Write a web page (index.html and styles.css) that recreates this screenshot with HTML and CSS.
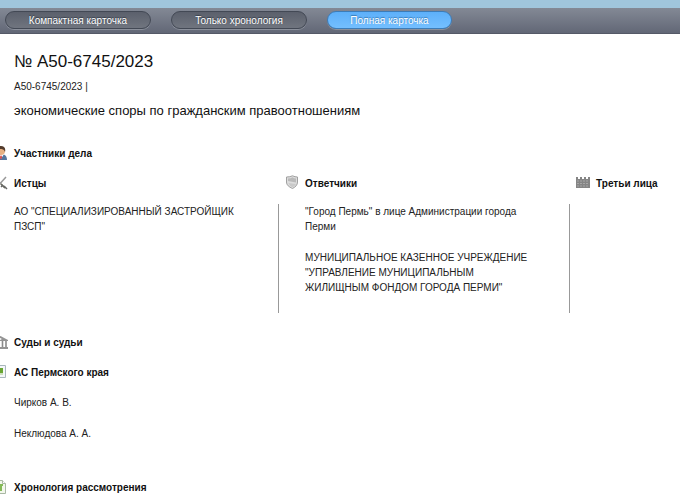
FILE: index.html
```html
<!DOCTYPE html>
<html lang="ru">
<head>
<meta charset="utf-8">
<title>А50-6745/2023</title>
<link rel="stylesheet" href="styles.css">
</head>
<body>
<nav class="bar">
  <button class="tab tab-wide" type="button">Компактная карточка</button>
  <button class="tab tab-mid" type="button">Только хронология</button>
  <button class="tab tab-active" type="button">Полная карточка</button>
</nav>
<main class="card">
  <header class="intro">
    <h1 class="number">№ А50-6745/2023</h1>
    <p class="ref">А50-6745/2023 |</p>
    <p class="subject">экономические споры по гражданским правоотношениям</p>
  </header>

  <section class="parties">
    <h2 class="head">
      <svg class="icon" viewBox="0 0 16 16" aria-hidden="true"><path d="M0 15c0-4 2-6 7-6s7 2 7 6z" fill="#56779f"/><path d="M5 9l3 5 3-5z" fill="#fff"/><path d="M8 10l1 2-1 3-1-3z" fill="#c33"/><circle cx="8" cy="6" r="4" fill="#e7b184"/><path d="M3 6c0-4 2-5 5-5s5 2 4 6c-1-3-3-3-5-3z" fill="#533c2c"/></svg>
      Участники дела
    </h2>
    <div class="columns">
      <section class="column">
        <h3 class="head">
          <svg class="icon" viewBox="0 0 16 16" aria-hidden="true"><path d="M1 2l11 11M13 2L4 12" stroke="#999" stroke-width="1.5"/><path d="M8 9l4 4" stroke="#696b5d" stroke-width="1.4"/><path d="M8 12l2-2M11 11l3 3" stroke="#666" stroke-width="1.5"/></svg>
          Истцы
        </h3>
        <div class="names"><p>АО "СПЕЦИАЛИЗИРОВАННЫЙ ЗАСТРОЙЩИК ПЗСП"</p></div>
      </section>
      <section class="column">
        <h3 class="head">
          <svg class="icon" viewBox="0 0 16 16" aria-hidden="true"><path d="M2.5 2Q6 2 8.500 .8Q11 2 13.500 2v5c0 3-2 5-5 6.500C5 12 2.500 10 2.500 7z" fill="#ddd" stroke="#a0a0a0"/><path d="M4 3.500q3 0 4.500-1.200Q10 3.500 12 3.500v4L4 6z" fill="#b9b9b9"/><path d="M4.500 8l7.500 1q-1 2-3.500 3.200Q5.500 11 4.500 8z" fill="#c9c9c9"/></svg>
          Ответчики
        </h3>
        <div class="names">
          <p>"Город Пермь" в лице Администрации города Перми</p>
          <p>МУНИЦИПАЛЬНОЕ КАЗЕННОЕ УЧРЕЖДЕНИЕ "УПРАВЛЕНИЕ МУНИЦИПАЛЬНЫМ<br>ЖИЛИЩНЫМ ФОНДОМ ГОРОДА ПЕРМИ"</p>
        </div>
      </section>
      <section class="column">
        <h3 class="head">
          <svg class="icon" viewBox="0 0 16 16" aria-hidden="true"><path d="M1 2h2v2h2V2h2v2h2V2h2v2h2V2h2v11H1z" fill="#858585"/><path d="M2 6h12M2 8.500h12M2 11h12" stroke="#b5b5b5" stroke-width=".7" stroke-dasharray="2 1"/></svg>
          Третьи лица
        </h3>
        <div class="names"></div>
      </section>
    </div>
  </section>

  <section class="courts">
    <h2 class="head">
      <svg class="icon" viewBox="0 0 16 16" aria-hidden="true"><path d="M0 6l7.500-4L15 6v1H0zM0 13h15v2H0z" fill="#949494"/><path d="M2 7v6M5.500 7v6M9.500 7v6M13 7v6" stroke="#8b8b8b" stroke-width="1.600"/><circle cx="7.500" cy="5" r="1" fill="#eee"/></svg>
      Суды и судьи
    </h2>
    <h3 class="head">
      <svg class="icon" viewBox="0 0 16 16" aria-hidden="true"><path d="M.5 1.500h12v12H.500z" fill="#f4f7f9" stroke="#a8b6bd"/><path d="M5 4h5v5H5z" fill="#68a532"/><path d="M7 10h3" stroke="#a6c981"/></svg>
      АС Пермского края
    </h3>
    <ul class="judges">
      <li>Чирков А. В.</li>
      <li>Неклюдова А. А.</li>
    </ul>
  </section>

  <section class="history">
    <h2 class="head">
      <svg class="icon" viewBox="0 0 16 16" aria-hidden="true"><path d="M1.500 1.500h8l3 3v10h-11z" fill="#f2f7ec" stroke="#a9b8a4"/><path d="M3 6h7M8 7v5" stroke="#83b956" stroke-width="2"/><path d="M9.500 1.500v3h3" fill="#fff" stroke="#a9b8a4"/></svg>
      Хронология рассмотрения
    </h2>
  </section>
</main>
</body>
</html>
```
FILE: styles.css
```css
* { box-sizing: border-box; }

body {
  margin: 0;
  background: #fff;
  color: #222;
  font: 10px/15px "Liberation Sans", Arial, sans-serif;
}

h1, h2, h3, p, ul { margin: 0; padding: 0; }

.bar {
  display: flex;
  align-items: center;
  gap: 20px;
  padding: 3px 5px 4px;
  border-top: 8px solid #a0c6dc;
  border-bottom: 1px solid #555967;
  background: linear-gradient(#838995, #626776);
}

.tab {
  width: 125px;
  height: 18px;
  padding: 0;
  border: 1px solid #434955;
  border-radius: 9px;
  background: linear-gradient(#5b606c, #70757f);
  box-shadow: 0 1px #8b909b;
  color: #fff;
  font: 10px/15px "Liberation Sans", Arial, sans-serif;
  text-shadow: 0 -1px 1px #333a46;
}

.tab-wide { width: 146px; }
.tab-mid { width: 136px; }

.tab-active {
  border-color: #3c7cb8;
  background: linear-gradient(#5db0fa, #74bfff);
  text-shadow: 0 -1px 1px #3678b2;
}

.card { padding-left: 14px; }

.number {
  padding-top: 16px;
  color: #111;
  font-size: 17px;
  font-weight: 400;
  line-height: 24px;
}

.ref { padding-top: 5px; }

.subject {
  padding-top: 7px;
  color: #111;
  font-size: 13px;
  line-height: 20px;
}

.head {
  display: flex;
  align-items: center;
  gap: 5px;
  height: 30px;
  margin-left: -21px;
  color: #111;
  font-size: 10px;
}

.icon { flex: none; width: 16px; height: 16px; }

.parties { padding-top: 17px; }

.columns {
  display: grid;
  grid-template-columns: 42% 42% 1fr;
  margin-left: -27px;
}

.column { display: flex; flex-direction: column; }
.column .head { margin-left: 6px; }

.names {
  display: flex;
  flex: 1;
  flex-direction: column;
  gap: 16px;
  margin-top: 6px;
  padding: 0 20px 18px 26px;
  border-left: 1px solid #999;
}

.courts { padding-top: 14px; }

.judges {
  display: grid;
  gap: 16px;
  padding: 8px 0;
  list-style: none;
}

.history { padding-top: 23px; }
```
